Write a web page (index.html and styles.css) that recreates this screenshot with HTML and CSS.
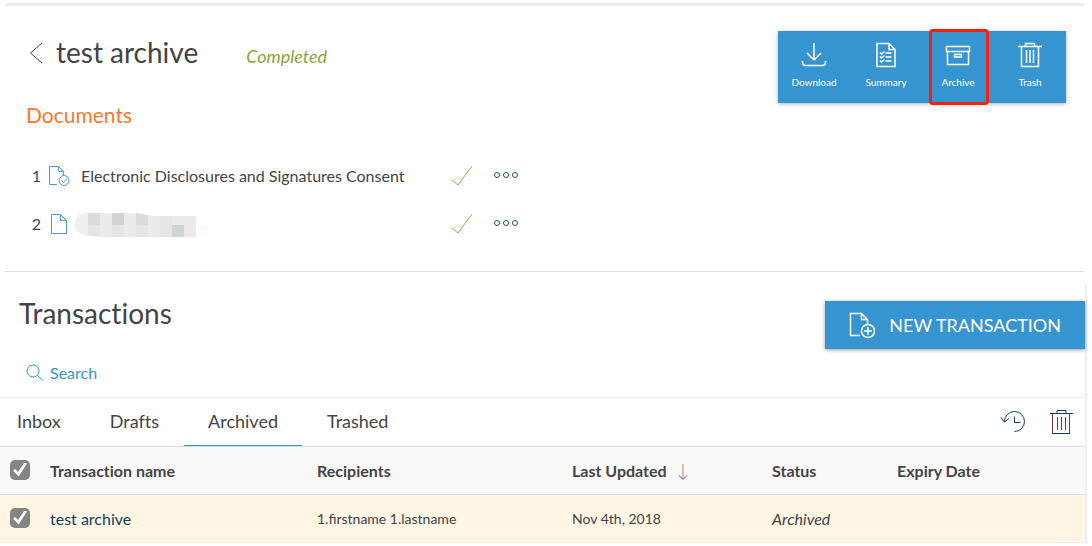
FILE: index.html
```html
<!DOCTYPE html>
<html lang="en">
<head>
<meta charset="utf-8">
<title>Transactions</title>
<link rel="stylesheet" href="styles.css">
</head>
<body>
<section class="detail">
  <header class="detail-head">
    <a class="back" href="#list" aria-label="Back"><svg width="14" height="22" viewBox="0 0 14 22"><path d="M13 1 1.500 11 13 21"/></svg></a>
    <h1 class="title">test archive</h1>
    <span class="state">Completed</span>
    <div class="toolbar">
      <button class="tool" type="button">
        <svg width="26" height="26" viewBox="0 0 26 26"><path d="M13 1v17M6 11l7 7 7-7M1.500 19v1.500q0 3 3 3h17q3 0 3-3V19"/></svg>
        <span>Download</span>
      </button>
      <button class="tool" type="button">
        <svg width="26" height="26" viewBox="0 0 26 26"><path d="M4 1.500h12l6 6v17H4zM16 1.500v6h6M12.500 11h6M12.500 15h6M12.500 19h6M7 10.500l1.500 1.500 3-2.500M7 14.500l1.500 1.500 3-2.500M7 18.500l1.500 1.500 3-2.500"/></svg>
        <span>Summary</span>
      </button>
      <button class="tool marked" type="button">
        <svg width="26" height="26" viewBox="0 0 26 26"><path d="M1.500 4.500h23v5h-23zM2.500 9.500v13h21v-13M9.500 12.500h7v2.500h-7z"/></svg>
        <span>Archive</span>
      </button>
      <button class="tool" type="button">
        <svg width="26" height="26" viewBox="0 0 26 26"><path d="M1 4.500h24M8.500 4V1.500h9V4M4.500 5v19.500h17V5M9.500 8v13M13 8v13M16.500 8v13"/></svg>
        <span>Trash</span>
      </button>
    </div>
  </header>
  <h2 class="subtitle">Documents</h2>
  <ol class="docs">
    <li class="doc">
      <span class="num">1</span>
      <svg class="file" width="24" height="22" viewBox="0 0 24 22"><path d="M10 19.500H2.500v-18h9l5 5V10M11.500 1.500v5h5"/><circle cx="17" cy="15.500" r="5"/><path d="m14.500 15.500 2 2 3.500-4"/></svg>
      <span class="doc-name">Electronic Disclosures and Signatures Consent</span>
      <svg class="done" width="24" height="24" viewBox="0 0 24 24"><path d="M2 16l6 5L22 2"/></svg>
      <button class="more" type="button" aria-label="More actions"><svg width="26" height="8" viewBox="0 0 26 8"><circle cx="4" cy="4" r="2.500"/><circle cx="13" cy="4" r="2.500"/><circle cx="22" cy="4" r="2.500"/></svg></button>
    </li>
    <li class="doc">
      <span class="num">2</span>
      <svg class="file plain" width="24" height="22" viewBox="0 0 24 22"><path d="M4.500 1.500h9l6 6v13h-15zM13.500 1.500v6h6"/></svg>
      <span class="doc-name hidden-name">
        <svg width="134" height="24" viewBox="0 0 134 24" shape-rendering="crispEdges">
          <clipPath id="smear"><path d="M10 0h52l16 3h43v8h12v13H27l-17-2Q0 20 0 11 0 2 10 0z"/></clipPath>
          <g clip-path="url(#smear)">
            <path fill="#ecebea" d="M0 0h121v24H0z"/>
            <path fill="#efefef" d="M0 0h13v12H0zM0 12h13v12H0z"/>
            <path fill="#dbdcde" d="M13 0h12v12H13zM61 0h12v12H61z"/>
            <path fill="#d2d3d5" d="M37 0h12v12H37zM97 12h12v12H97z"/>
            <path fill="#e4e6e6" d="M37 12h12v12H37zM61 12h12v12H61zM85 0h12v12H85zM85 12h12v12H85zM13 12h12v12H13z"/>
            <path fill="#fbfcfd" d="M121 12h12v12h-12z"/>
          </g>
        </svg>
      </span>
      <svg class="done" width="24" height="24" viewBox="0 0 24 24"><path d="M2 16l6 5L22 2"/></svg>
      <button class="more" type="button" aria-label="More actions"><svg width="26" height="8" viewBox="0 0 26 8"><circle cx="4" cy="4" r="2.500"/><circle cx="13" cy="4" r="2.500"/><circle cx="22" cy="4" r="2.500"/></svg></button>
    </li>
  </ol>
</section>

<section class="list" id="list">
  <header class="list-head">
    <div class="list-intro">
      <h1 class="title">Transactions</h1>
      <a class="search" href="#search"><svg width="18" height="18" viewBox="0 0 18 18"><circle cx="7" cy="7" r="6"/><path d="m11.500 11.500 5.500 5"/></svg>Search</a>
    </div>
    <button class="new" type="button">
      <svg width="28" height="28" viewBox="0 0 28 28"><path d="M13 24.500H3.500v-22h11l6 6V13M14.500 2.500v6h6"/><circle cx="21" cy="20" r="6.500"/><path d="M21 16v8M17 20h8"/></svg>
      NEW TRANSACTION
    </button>
  </header>
  <nav class="tabs">
    <a class="tab" href="#inbox">Inbox</a>
    <a class="tab" href="#drafts">Drafts</a>
    <a class="tab active" href="#archived" aria-current="page">Archived</a>
    <a class="tab" href="#trashed">Trashed</a>
    <div class="tab-tools">
      <button class="icon-btn" type="button" aria-label="History"><svg width="26" height="26" viewBox="0 0 26 26"><path d="M4.500 12.500A10 10 0 1 1 14.500 22.500M1 8.500l3.500 4.500L9 9.500M14.500 7.500v6h6"/></svg></button>
      <button class="icon-btn" type="button" aria-label="Move to trash"><svg width="26" height="26" viewBox="0 0 26 26"><path class="plum" d="M4.500 5v19.500M21.500 5v19.500M9.500 8v13M13.500 8v13M17.500 8v13"/><path d="M2 4.500h23M9 4V1.500h9V4M4 24.500h18"/></svg></button>
    </div>
  </nav>
  <table class="grid">
    <colgroup><col class="c-check"><col><col class="c-recipients"><col class="c-updated"><col class="c-status"><col class="c-expiry"></colgroup>
    <thead>
      <tr>
        <th class="pick"><input type="checkbox" checked aria-label="Select all"></th>
        <th>Transaction name</th>
        <th>Recipients</th>
        <th>Last Updated <svg class="sort" width="10" height="18" viewBox="0 0 10 18"><path d="M5 1v15"/><path class="head" d="M1 12.500l4 4 4-4"/></svg></th>
        <th>Status</th>
        <th>Expiry Date</th>
      </tr>
    </thead>
    <tbody>
      <tr>
        <td class="pick"><input type="checkbox" checked aria-label="Select test archive"></td>
        <td><a class="name" href="#test-archive">test archive</a></td>
        <td class="small">1.firstname 1.lastname</td>
        <td class="small">Nov 4th, 2018</td>
        <td class="status">Archived</td>
        <td></td>
      </tr>
    </tbody>
  </table>
</section>
</body>
</html>
```
FILE: styles.css
```css
* { box-sizing: border-box; }

body {
  margin: 0;
  padding: 3px 5px 0 0;
  background: #fff;
  color: #444;
  font: 16px/24px Lato, sans-serif;
  font-variant-ligatures: none;
}

button { font: inherit; font-variant-ligatures: none; border: 0; padding: 0; background: none; color: inherit; cursor: pointer; }
a { color: inherit; text-decoration: none; }
svg { display: block; flex: none; fill: none; stroke: currentColor; }
h1, h2, ol { margin: 0; padding: 0; font-weight: 400; }

.title { font-size: 28px; line-height: 36px; }

.detail {
  margin: 0 3px 12px 5px;
  padding: 25px 18px 23px 21px;
  border-top: 3px solid #eee;
  border-bottom: 1px solid #ddd;
}
.detail-head { display: flex; align-items: flex-start; height: 72px; }
.back { padding: 11px 13px 0 3px; }
.detail-head .title { padding-top: 3px; }
.state { margin-left: 48px; padding-top: 13px; color: #8aa53c; font-size: 18px; font-style: italic; }

.toolbar { display: flex; margin-left: auto; background: #3694d0; box-shadow: 0 1px 4px rgba(0, 0, 0, .3); }
.tool {
  position: relative;
  display: flex;
  flex-direction: column;
  align-items: center;
  gap: 7px;
  width: 72px;
  height: 72px;
  padding-top: 11px;
  color: #fff;
  font-size: 10px;
  line-height: 14px;
}
.tool svg { stroke-width: 1.5; }
.marked::after {
  content: "";
  position: absolute;
  inset: -2px 5px -2px 7px;
  border: 3px solid #f8200f;
  border-radius: 4px;
}

.subtitle { color: #fc7630; font-size: 21px; line-height: 24px; }
.docs { margin-top: 25px; list-style: none; }
.doc { display: flex; align-items: center; height: 48px; }
.num { width: 15px; margin-right: 6px; text-align: right; }
.file { color: #4a9bd8; }
.doc-name { width: 369px; margin-left: 10px; }
.hidden-name { width: 375px; margin-left: 4px; padding-top: 2px; }
.hidden-name svg { stroke: none; }
.done { color: #9aab45; }
.more { margin-left: 19px; padding-bottom: 2px; color: #24506f; }

.list { border-right: 2px solid #eee; }
.list-head { display: flex; justify-content: space-between; align-items: flex-start; }
.list-intro { padding: 11px 0 12px 19px; }
.search { display: flex; align-items: center; gap: 6px; margin: 30px 0 0 7px; color: #3694d0; }
.new {
  display: flex;
  align-items: center;
  gap: 14px;
  height: 48px;
  margin-top: 17px;
  padding: 0 24px 0 22px;
  background: #3694d0;
  box-shadow: 0 1px 4px rgba(0, 0, 0, .4);
  color: #fff;
  font-size: 18px;
}
.new svg { stroke-width: 1.5; }

.tabs { display: flex; align-items: stretch; gap: 1px; height: 50px; border-top: 1px solid #eee; border-bottom: 1px solid #ddd; font-size: 18px; }
.tab { padding: 11px 24px 0; }
.tab:first-child { padding-left: 17px; }
.active { border-bottom: 1px solid #3694d0; }
.tab-tools { display: flex; align-items: center; gap: 22px; margin-left: auto; padding-right: 11px; color: #123f63; }
.plum { stroke: #7d3150; }

.grid { width: 100%; table-layout: fixed; border-spacing: 0; }
.c-check { width: 50px; }
.c-recipients { width: 255px; }
.c-updated { width: 200px; }
.c-status { width: 125px; }
.c-expiry { width: 188px; }
th, td { height: 48px; padding: 0; text-align: left; vertical-align: middle; }
th { background: #f9f9f9; border-bottom: 1px solid #ddd; font-weight: 700; }
td { background: #fef5e4; border-bottom: 1px solid #eee; }
.sort { display: inline-block; margin-left: 7px; vertical-align: middle; color: #bd8a4c; }
.head { stroke: #555; }
.pick { padding: 0 0 2px 10px; }
.pick input {
  appearance: none;
  display: grid;
  place-items: center;
  width: 20px;
  height: 20px;
  margin: 0;
  border-radius: 5px;
  background: #858585;
}
.pick input::before {
  content: "";
  width: 14px;
  height: 14px;
  background: #fff;
  clip-path: polygon(0 58%, 15% 46%, 36% 68%, 82% 0, 100% 8%, 40% 100%);
}
.name { color: #123f63; }
.small { font-size: 14px; font-variant-ligatures: normal; }
.status { font-style: italic; }
```
